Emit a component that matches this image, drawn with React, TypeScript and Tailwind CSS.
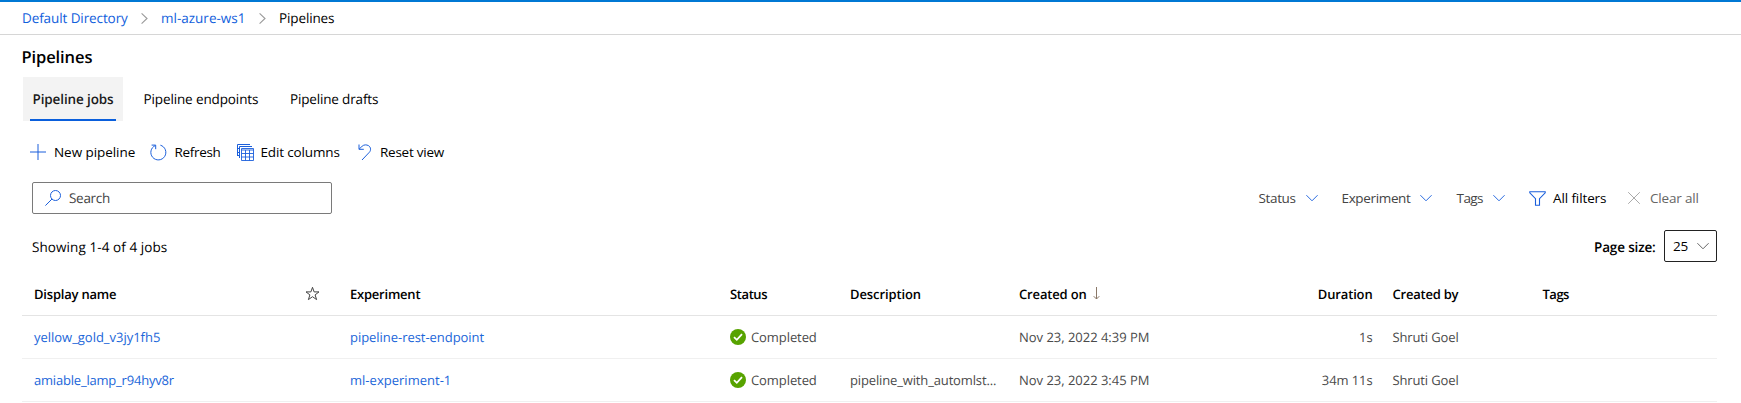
import type { ReactNode } from "react";

function Chevron({ className, down = true }: { className: string; down?: boolean }) {
  return (
    <svg viewBox="0 0 12 12" className={className} fill="none" stroke="currentColor" strokeWidth="1">
      {down ? <path d="M.4 3.2 6 8.8l5.6-5.6" /> : <path d="M2.4 1.300 7.400 6l-5 4.700" />}
    </svg>
  );
}

function PlusIcon() {
  return (
    <svg viewBox="0 0 16 16" className="h-4 w-4" fill="none" stroke="currentColor">
      <path d="M8 0v16M0 8h16" />
    </svg>
  );
}

function RefreshIcon() {
  return (
    <svg viewBox="0 0 17 17" className="h-[17px] w-[17px]" fill="none" stroke="currentColor">
      <path d="M10.4 1.2a7.5 7.5 0 1 1-5.2.4M1.6 1.1h4.1v4.1" />
    </svg>
  );
}

function ColumnsIcon() {
  return (
    <svg viewBox="0 0 17 17" className="h-[17px] w-[17px]" fill="none" stroke="currentColor">
      <path d="M.5 12V.5H13M.5 4.500h2M.5 8.500h2M.5 11.500h2M2.500 14V2.500H15" />
      <path d="M4.500 4.500h12v12h-12zM4.500 6h12M4.500 9.500h12M4.500 13h12M8.500 6v10.500M12.500 6v10.500" strokeWidth=".9" />
    </svg>
  );
}

function ResetIcon() {
  return (
    <svg viewBox="0 0 14 17" className="h-[17px] w-[14px]" fill="none" stroke="currentColor">
      <path d="M1 .5v4.8h4.8M1.2 5.1l3-3C6 .6 8.500.5 10.600 1.700c2.400 1.600 2.500 4.700.8 6.500L4 16" />
    </svg>
  );
}

function SearchIcon() {
  return (
    <svg viewBox="0 0 16 16" className="h-4 w-4" fill="none" stroke="currentColor">
      <circle cx="10.500" cy="5.500" r="5" />
      <path d="M7 9 .4 15.600" />
    </svg>
  );
}

function FilterIcon() {
  return (
    <svg viewBox="0 0 17 15" className="h-[15px] w-[17px]" fill="none" stroke="currentColor" strokeWidth="1.1">
      <path d="M.8.8h15.400v1L10.500 7.700v6.500h-4V7.700L.8 1.800z" />
    </svg>
  );
}

function CheckIcon() {
  return (
    <svg viewBox="0 0 16 16" className="h-4 w-4 shrink-0" fill="none">
      <circle cx="8" cy="8" r="8" fill="#57a300" />
      <path d="m4 8.100 2.800 2.700L12 5.200" stroke="#fff" strokeWidth="1.800" />
    </svg>
  );
}

function Command({ icon, label, className }: { icon: ReactNode; label: string; className: string }) {
  return (
    <button className={`flex shrink-0 items-center text-left ${className}`}>
      <span className="shrink-0 text-[#1b5fdb]">{icon}</span>
      <span>{label}</span>
    </button>
  );
}

function Filter({ label, className }: { label: string; className: string }) {
  return (
    <button className={`flex shrink-0 items-center justify-between text-[#444] ${className}`}>
      {label}
      <Chevron className="h-3 w-3 text-[#2a6be0]" />
    </button>
  );
}

const columns =
  "grid grid-cols-[271px_45px_380px_120px_169px_254.500px_99px_20px_150px_1fr] items-center pl-3 whitespace-nowrap";

const jobs = [
  {
    name: "yellow_gold_v3jy1fh5",
    nameStyle: "tracking-[-0.02px]",
    experiment: "pipeline-rest-endpoint",
    experimentStyle: "tracking-[-0.04px]",
    description: "",
    created: "Nov 23, 2022 4:39 PM",
    duration: "1s",
  },
  {
    name: "amiable_lamp_r94hyv8r",
    nameStyle: "tracking-[-0.2px]",
    experiment: "ml-experiment-1",
    experimentStyle: "tracking-[0.02px]",
    description: "pipeline_with_automlst...",
    created: "Nov 23, 2022 3:45 PM",
    duration: "34m 11s",
  },
];

export default function App() {
  return (
    <div className="h-[403px] overflow-hidden border-t-2 border-[#0078d4] bg-white font-['Open_Sans',sans-serif] text-[13.500px] leading-5 whitespace-nowrap text-black [text-rendering:geometricPrecision]">
      <nav className="flex h-[33px] items-center border-b border-[#d6d6d6] pl-[22px] text-[#1160dc]">
        <a className="w-[117px] tracking-[-0.1px]">Default Directory</a>
        <Chevron down={false} className="mr-[9px] h-[13px] w-[13px] text-[#999]" />
        <a className="w-[96px]">ml-azure-ws1</a>
        <Chevron down={false} className="mr-[9px] h-[13px] w-[13px] text-[#999]" />
        <span className="tracking-[-0.12px] text-black">Pipelines</span>
      </nav>

      <h1 className="mt-[9px] pl-[21.500px] text-[16.500px] leading-[26px] font-semibold tracking-[-0.1px]">Pipelines</h1>

      <div className="mt-[7px] flex h-11 pl-[23px]">
        <div className="flex w-[100px] flex-col items-center bg-[#f3f3f3] pt-[12px] font-semibold tracking-[-0.12px] text-[#1b1b1b]">
          <span className="h-[30px]">Pipeline jobs</span>
          <span className="h-[2px] w-[86px] bg-[#0a5fdc]" />
        </div>
        <span className="w-[146.500px] pt-[12px] pl-[20.500px] tracking-[-0.12px]">Pipeline endpoints</span>
        <span className="pt-[12px] pl-[20.500px] tracking-[-0.16px]">Pipeline drafts</span>
      </div>

      <div className="mt-[21px] flex h-5 items-center pl-[30px]">
        <Command icon={<PlusIcon />} label="New pipeline" className="w-[120px] gap-[8px] tracking-[-0.06px]" />
        <Command icon={<RefreshIcon />} label="Refresh" className="w-[86.500px] gap-[7.500px] tracking-[-0.33px]" />
        <Command icon={<ColumnsIcon />} label="Edit columns" className="w-[121px] gap-[7px] tracking-[-0.14px]" />
        <Command icon={<ResetIcon />} label="Reset view" className="gap-[8.500px] tracking-[-0.25px]" />
      </div>

      <div className="mt-5 flex h-8 items-center pl-8">
        <div className="mr-auto flex h-8 w-[300px] items-center gap-2 rounded-xs border border-[#7a7a7a] pl-[12px] text-[#1b5fdb]">
          <SearchIcon />
          <span className="tracking-[-0.29px] text-[#444]">Search</span>
        </div>
        <Filter label="Status" className="mr-[24px] w-[59px] tracking-[-0.36px]" />
        <Filter label="Experiment" className="mr-[24.500px] w-[90.500px] tracking-[-0.35px]" />
        <Filter label="Tags" className="mr-[24px] w-[48px] tracking-[-0.55px]" />
        <Command icon={<FilterIcon />} label="All filters" className="w-[99.500px] gap-[7.500px] tracking-[-0.11px]" />
        <button className="flex w-[113px] items-center gap-[10px] tracking-[-0.18px] text-[#666]">
          <svg viewBox="0 0 12 12" className="h-3 w-3" fill="none" stroke="#aaa">
            <path d="m.2.2 11.600 11.600m0-11.600L.2 11.800" />
          </svg>
          Clear all
        </button>
      </div>

      <div className="mt-4 flex h-8 items-center pr-6 pl-8">
        <span className="mr-auto pt-0.5 tracking-[0.08px]">Showing 1-4 of 4 jobs</span>
        <span className="w-[70px] pt-0.5 font-semibold tracking-[-0.15px]">Page size:</span>
        <button className="flex h-8 w-[53px] items-center justify-between rounded-xs border border-[#222] pr-[7px] pl-2 tracking-[-0.2px]">
          25
          <Chevron className="h-3 w-3 text-[#666]" />
        </button>
      </div>

      <div className="mt-[10px] mr-6 ml-[22px] text-[13px]">
        <div className={`${columns} h-11 border-b border-[#e4e4e4] font-semibold`}>
          <span className="tracking-[-0.2px]">Display name</span>
          <svg viewBox="0 0 15 15" className="h-[15px] w-[15px]" fill="none" stroke="#444">
            <path d="m7.500 1.300 1.600 4.600H14l-3.900 3 1.500 4.700-4.100-2.900-4.100 2.900 1.500-4.700-3.900-3h4.900z" />
          </svg>
          <span className="tracking-[-0.22px]">Experiment</span>
          <span className="tracking-[-0.4px]">Status</span>
          <span className="tracking-[-0.1px]">Description</span>
          <span className="flex items-center gap-[6px] tracking-[-0.15px]">
            Created on
            <svg viewBox="0 0 7 13" className="h-[13px] w-[7px]" fill="none" stroke="#8a7868">
              <path d="M3.500 0v12M.7 9.200l2.800 2.800 2.800-2.800" />
            </svg>
          </span>
          <span className="text-right tracking-[-0.15px]">Duration</span>
          <span />
          <span className="tracking-[-0.22px]">Created by</span>
          <span className="tracking-[-0.5px]">Tags</span>
        </div>
        {jobs.map((job) => (
          <div key={job.name} className={`${columns} h-[43px] border-b border-[#f0f0f0] text-[#4a4a4a]`}>
            <a className={`text-[#1b66d9] ${job.nameStyle}`}>{job.name}</a>
            <span />
            <a className={`text-[#1b66d9] ${job.experimentStyle}`}>{job.experiment}</a>
            <span className="flex items-center gap-[5px] tracking-[-0.08px]">
              <CheckIcon />
              Completed
            </span>
            <span className="tracking-[-0.14px]">{job.description}</span>
            <span className="tracking-[-0.02px]">{job.created}</span>
            <span className="text-right tracking-[-0.1px]">{job.duration}</span>
            <span />
            <span className="tracking-[-0.13px]">Shruti Goel</span>
            <span />
          </div>
        ))}
      </div>
    </div>
  );
}
